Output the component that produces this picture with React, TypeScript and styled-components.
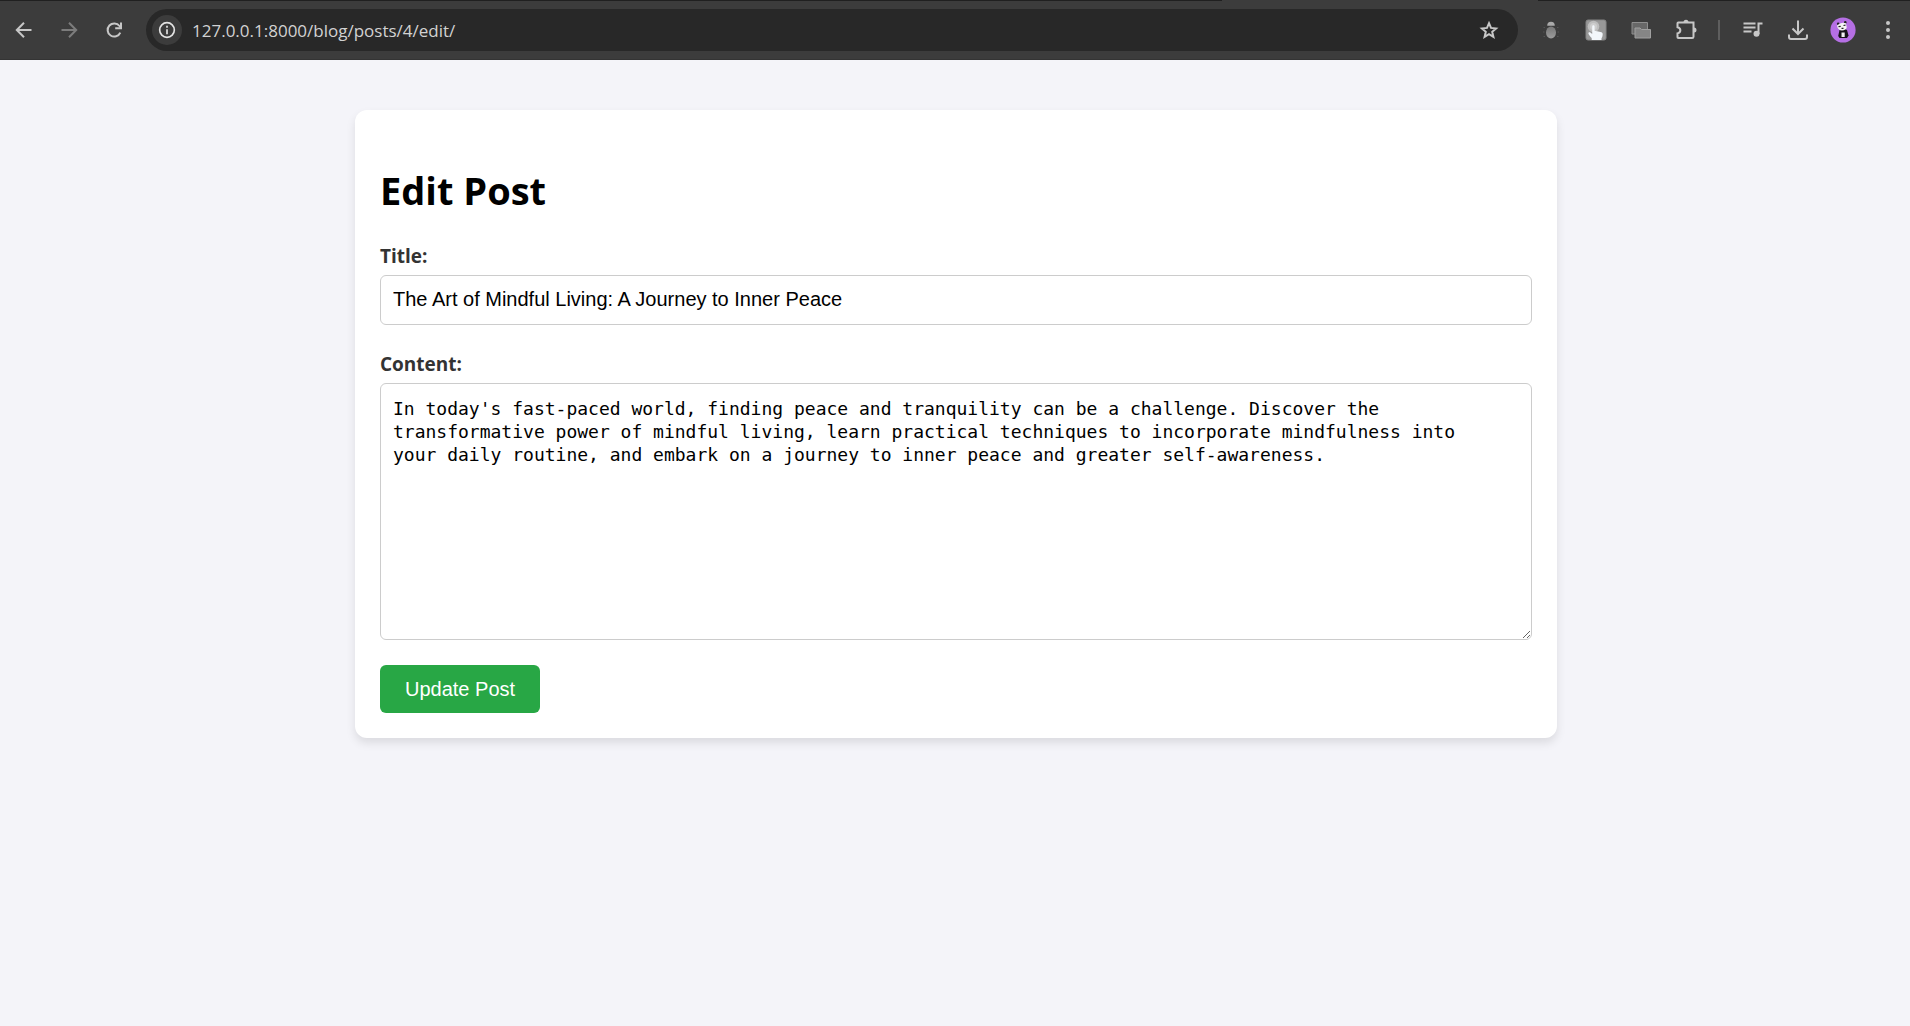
import React, { useState } from "react";
import styled, { createGlobalStyle } from "styled-components";

const GlobalStyle = createGlobalStyle`
  * { box-sizing: border-box; }
  body {
    margin: 0;
    background: #f4f4f9;
    font-family: "Open Sans", "Noto Sans", sans-serif;
  }
`;

const TabStrip = styled.div`
  display: flex;
  height: 1px;
  padding-left: 64%;
  background: #202020;
`;

const ActiveTab = styled.div`
  width: 316px;
  background: #3c3c3c;
`;

const Toolbar = styled.header`
  display: flex;
  align-items: center;
  height: 59px;
  padding-left: 1px;
  background: #3c3c3c;
  border-bottom: 1px solid #343434;
`;

const Group = styled.div`
  display: flex;
  align-items: center;
  flex: none;
`;

const ToolButton = styled.button<{ $dim?: boolean }>`
  display: flex;
  align-items: center;
  justify-content: center;
  width: 45px;
  height: 42px;
  padding: 0;
  border: 0;
  border-radius: 21px;
  background: transparent;
  color: ${(p) => (p.$dim ? "#7c7c7c" : "#c7c7c7")};
`;

const AddressBar = styled.div`
  display: flex;
  align-items: center;
  flex: 1;
  height: 42px;
  margin: 0 10px;
  padding: 0 7px 0 6px;
  border-radius: 21px;
  background: #282828;
`;

const SiteInfo = styled.button`
  display: flex;
  align-items: center;
  justify-content: center;
  width: 30px;
  height: 30px;
  padding: 0;
  border: 0;
  border-radius: 50%;
  background: #3c3c3c;
  color: #e3e3e3;
`;

const Address = styled.input`
  flex: 1;
  min-width: 0;
  height: 30px;
  margin-left: 10px;
  padding: 0;
  border: 0;
  outline: 0;
  background: transparent;
  color: #d2d2d2;
  font: 17px "Open Sans", "Noto Sans", sans-serif;
`;

const Divider = styled.span`
  width: 2px;
  height: 20px;
  margin: 0 10px;
  background: #5e5e5e;
`;

const Page = styled.main`
  padding: 50px 20px 50px 22px;
`;

const Card = styled.section`
  max-width: 1202px;
  margin: 0 auto;
  padding: 25px;
  border-radius: 12px;
  background: #fff;
  box-shadow: 0 5px 10px rgba(0, 0, 0, 0.1);
`;

const Heading = styled.h1`
  margin: 27px 0 24px;
  color: #000;
  font-size: 38px;
  line-height: 56px;
`;

const Field = styled.div`
  display: flex;
  flex-direction: column;
  gap: 4px;
  margin-bottom: 25px;
`;

const Label = styled.label`
  color: #333;
  font-size: 19px;
  font-weight: 700;
  line-height: 29px;
`;

const TextInput = styled.input`
  width: 100%;
  height: 50px;
  padding: 0 12px 2px;
  border: 1px solid #ccc;
  border-radius: 6px;
  background: #fff;
  color: #000;
  font: 20px "Liberation Sans", Arial, sans-serif;
`;

const TextArea = styled.textarea`
  display: block;
  width: 100%;
  height: 257px;
  padding: 13px 36px 12px 12px;
  border: 1px solid #ccc;
  border-radius: 6px;
  background: #fff;
  color: #000;
  font: 18px/23px "DejaVu Sans Mono", Consolas, monospace;
  resize: vertical;
`;

const SubmitButton = styled.button`
  display: block;
  height: 48px;
  padding: 0 25px;
  border: 0;
  border-radius: 6px;
  background: #28a745;
  color: #fff;
  font: 20px "Liberation Sans", Arial, sans-serif;
`;

type GlyphProps = { size?: number; width?: number; children: React.ReactNode };

const Glyph = ({ size = 24, width = 2, children }: GlyphProps) => (
  <svg width={size} height={size} viewBox="0 0 24 24" fill="none" stroke="currentColor" strokeWidth={width} aria-hidden="true">
    {children}
  </svg>
);

const BackIcon = () => (
  <Glyph><path d="M19.5 12H5.5M12 4.8 4.8 12l7.2 7.2" /></Glyph>
);

const ForwardIcon = () => (
  <Glyph><path d="M4.5 12h14M12 4.8l7.2 7.2-7.2 7.2" /></Glyph>
);

const ReloadIcon = () => (
  <Glyph>
    <path d="M18.3 14.6A6.6 6.6 0 1 1 17.5 8l1 1.4" />
    <path d="M19 4.6v5.6h-5.8" />
  </Glyph>
);

const InfoIcon = () => (
  <Glyph size={20}>
    <circle cx="12" cy="12" r="8.8" />
    <path d="M12 11v6M12 7v2.2" />
  </Glyph>
);

const StarIcon = () => (
  <Glyph>
    <path d="m12 5.2 2 4.7 5.1.5-3.9 3.4 1.2 5-4.4-2.7-4.4 2.7 1.2-5-3.9-3.4 5.1-.5z" />
  </Glyph>
);

const BugIcon = () => (
  <svg width="24" height="24" viewBox="0 0 24 24" aria-hidden="true">
    <defs>
      <linearGradient id="bugBody" x1="0" y1="0" x2="0" y2="1">
        <stop offset="0" stopColor="#777" />
        <stop offset="1" stopColor="#9d9d9d" />
      </linearGradient>
    </defs>
    <path d="M8.2 7.7a3.8 4 0 0 1 7.6 0z" fill="#aaa" />
    <ellipse cx="12" cy="14.6" rx="5" ry="6" fill="url(#bugBody)" />
    <path d="M4.5 9.5h1.5M4 14h1.5M4.5 18.5H6M18 9.5h1.5M18.5 14H20M18 18.5h1.5" stroke="#555" />
  </svg>
);

const HandIcon = () => (
  <svg width="22" height="22" viewBox="0 0 22 22" aria-hidden="true">
    <rect x="1" y="1" width="20" height="20" rx="2" fill="#989898" stroke="#858585" />
    <circle cx="8.5" cy="7.5" r="5.8" fill="#bebebe" />
    <circle cx="8.5" cy="7.5" r="3.5" fill="#cecece" />
    <path d="M7.2 7.5c0-1.6 2.4-1.6 2.4 0v4.3l2.4.4 2.300.5 2.200.6q1.300.4 1.200 1.700c0 1.900-.5 3.200-1.200 4.200V21H6.700v-1.900c-1.500-1.400-2.700-3-3.200-4.300-.5-1.500.9-2.100 1.900-1.200l1.800 1.400z" fill="#f3f7fb" />
  </svg>
);

const WindowsIcon = () => (
  <svg width="22" height="20" viewBox="0 0 22 20" aria-hidden="true">
    <path d="M2 2.500h15.500v11.500H2z" fill="#686868" stroke="#8f8f8f" />
    <path d="M5 8h5l1.500 1.500h9V18H5z" fill="#858585" stroke="#a0a0a0" />
  </svg>
);

const PuzzleIcon = () => (
  <Glyph>
    <path d="M4.300 4.500H19.500V18.700Q19.500 20 18.200 20H4.300Q3.500 20 3.500 19.200V15.400c3.800-.8 3.800-5.300 0-6.100V5.300Q3.500 4.500 4.300 4.500z" />
    <path d="M9.500 4.200a2.500 2.500 0 0 1 5 0zM20 9.600a2.500 2.500 0 0 1 0 5z" fill="currentColor" stroke="none" />
  </Glyph>
);

const MusicIcon = () => (
  <Glyph>
    <path d="M2.500 5.500h12M2.500 9.500h12M2.500 13.500h8" />
    <path d="M21.500 5.500h-4v10.500" />
    <circle cx="15.500" cy="15.800" r="3" fill="currentColor" stroke="none" />
  </Glyph>
);

const DownloadIcon = () => (
  <Glyph>
    <path d="M12 2.500v13M6.500 10.500 12 16l5.500-5.500M3 16.500V19q0 2 2 2h14q2 0 2-2v-2.500" />
  </Glyph>
);

const PandaAvatar = () => (
  <svg width="26" height="26" viewBox="0 0 26 26" aria-hidden="true">
    <circle cx="13" cy="13" r="12.600" fill="#b56fe4" />
    <path d="M9.500 13q4-2 7.500 0l1.500 5.500-1.500 2.500H9.500l-1.300-2z" fill="#17151a" />
    <path d="M11.500 15.500h3.200v4.500h-3.200z" fill="#f1f1f1" />
    <circle cx="8.200" cy="6.700" r="1.300" fill="#222" />
    <circle cx="15.300" cy="5.400" r="1.300" fill="#222" />
    <path d="M7 8.500Q11 4.500 16 6.300l.7 4.200q-.6 2.700-4.700 3.100-4.300-.4-5-5.100z" fill="#f5f5f5" />
    <path d="m8.500 9.700 2.200-.3M13.500 8.500l2-.3M11.500 11.300h2" stroke="#222" strokeWidth="1.200" />
  </svg>
);

const MoreIcon = () => (
  <Glyph>
    <g fill="currentColor" stroke="none">
      <circle cx="12" cy="5" r="2" />
      <circle cx="12" cy="12" r="2" />
      <circle cx="12" cy="19" r="2" />
    </g>
  </Glyph>
);

const POST = {
  title: "The Art of Mindful Living: A Journey to Inner Peace",
  content:
    "In today's fast-paced world, finding peace and tranquility can be a challenge. Discover the transformative power of mindful living, learn practical techniques to incorporate mindfulness into your daily routine, and embark on a journey to inner peace and greater self-awareness.",
};

export default function App() {
  const [address, setAddress] = useState("127.0.0.1:8000/blog/posts/4/edit/");
  const [title, setTitle] = useState(POST.title);
  const [content, setContent] = useState(POST.content);

  return (
    <>
      <GlobalStyle />
      <TabStrip><ActiveTab /></TabStrip>
      <Toolbar>
        <Group>
          <ToolButton aria-label="Back"><BackIcon /></ToolButton>
          <ToolButton aria-label="Forward" $dim><ForwardIcon /></ToolButton>
          <ToolButton aria-label="Reload"><ReloadIcon /></ToolButton>
        </Group>
        <AddressBar>
          <SiteInfo aria-label="Site information"><InfoIcon /></SiteInfo>
          <Address aria-label="Address" value={address} onChange={(e) => setAddress(e.target.value)} spellCheck={false} />
          <ToolButton aria-label="Bookmark"><StarIcon /></ToolButton>
        </AddressBar>
        <Group>
          <ToolButton aria-label="Debugger"><BugIcon /></ToolButton>
          <ToolButton aria-label="Click helper"><HandIcon /></ToolButton>
          <ToolButton aria-label="Windows"><WindowsIcon /></ToolButton>
          <ToolButton aria-label="Extensions"><PuzzleIcon /></ToolButton>
          <Divider />
          <ToolButton aria-label="Media"><MusicIcon /></ToolButton>
          <ToolButton aria-label="Downloads"><DownloadIcon /></ToolButton>
          <ToolButton aria-label="Profile"><PandaAvatar /></ToolButton>
          <ToolButton aria-label="Menu"><MoreIcon /></ToolButton>
        </Group>
      </Toolbar>
      <Page>
        <Card>
          <Heading>Edit Post</Heading>
          <form onSubmit={(e) => e.preventDefault()}>
            <Field>
              <Label htmlFor="title">Title:</Label>
              <TextInput id="title" value={title} onChange={(e) => setTitle(e.target.value)} />
            </Field>
            <Field>
              <Label htmlFor="content">Content:</Label>
              <TextArea id="content" value={content} onChange={(e) => setContent(e.target.value)} spellCheck={false} />
            </Field>
            <SubmitButton type="submit">Update Post</SubmitButton>
          </form>
        </Card>
      </Page>
    </>
  );
}
